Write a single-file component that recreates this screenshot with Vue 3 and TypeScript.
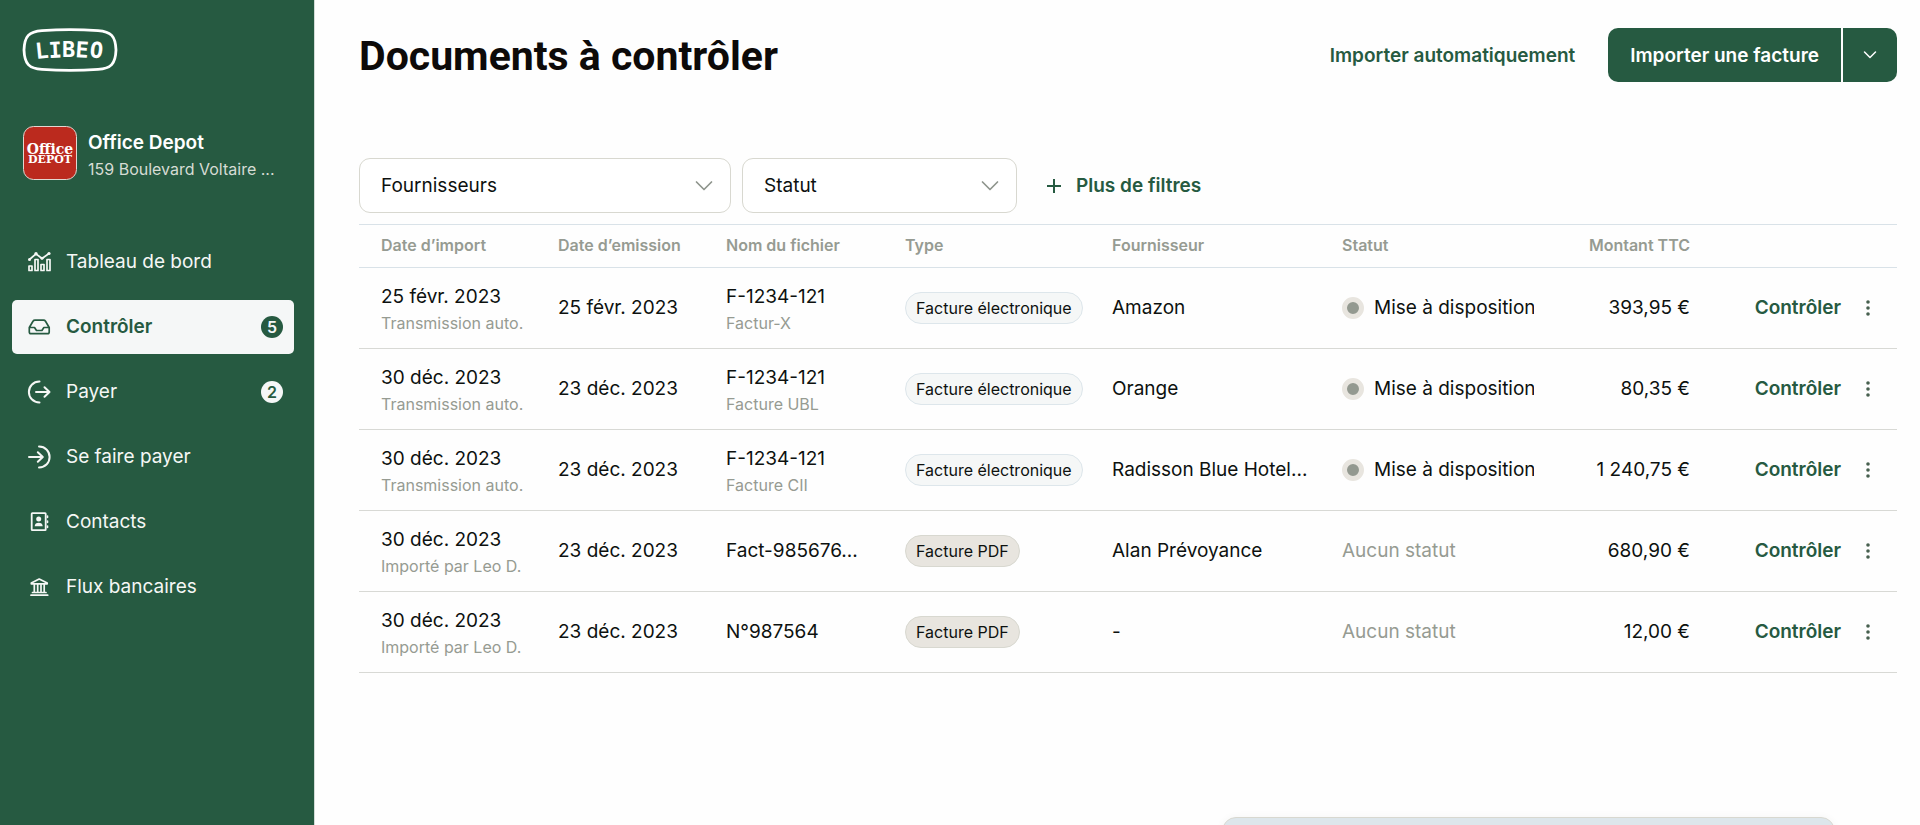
<script setup lang="ts">
import { ref } from 'vue'

interface NavItem {
  label: string
  icon: string
  badge?: number
}

interface DocumentRow {
  imported: string
  source: string
  issued: string
  file: string
  format?: string
  type: 'electronic' | 'pdf'
  supplier: string
  available: boolean
  amount: string
}

const navItems: NavItem[] = [
  { label: 'Tableau de bord', icon: 'chart' },
  { label: 'Contrôler', icon: 'inbox', badge: 5 },
  { label: 'Payer', icon: 'out', badge: 2 },
  { label: 'Se faire payer', icon: 'in' },
  { label: 'Contacts', icon: 'contacts' },
  { label: 'Flux bancaires', icon: 'bank' },
]
const active = ref('Contrôler')

const typeLabels = { electronic: 'Facture électronique', pdf: 'Facture PDF' }

const rows: DocumentRow[] = [
  { imported: '25 févr. 2023', source: 'Transmission auto.', issued: '25 févr. 2023', file: 'F-1234-121', format: 'Factur-X', type: 'electronic', supplier: 'Amazon', available: true, amount: '393,95 €' },
  { imported: '30 déc. 2023', source: 'Transmission auto.', issued: '23 déc. 2023', file: 'F-1234-121', format: 'Facture UBL', type: 'electronic', supplier: 'Orange', available: true, amount: '80,35 €' },
  { imported: '30 déc. 2023', source: 'Transmission auto.', issued: '23 déc. 2023', file: 'F-1234-121', format: 'Facture CII', type: 'electronic', supplier: 'Radisson Blue Hotel...', available: true, amount: '1 240,75 €' },
  { imported: '30 déc. 2023', source: 'Importé par Leo D.', issued: '23 déc. 2023', file: 'Fact-985676...', type: 'pdf', supplier: 'Alan Prévoyance', available: false, amount: '680,90 €' },
  { imported: '30 déc. 2023', source: 'Importé par Leo D.', issued: '23 déc. 2023', file: 'N°987564', type: 'pdf', supplier: '-', available: false, amount: '12,00 €' },
]
</script>

<template>
  <div class="app">
    <aside class="sidebar">
      <a href="#" class="brand" aria-label="Libeo">
        <svg width="96" height="44" viewBox="0 0 96 44">
          <path d="M20 2.600 Q48 .6 76 2.600 C89 3.500 93.500 8 94 22 C93.500 36 89 40.500 76 41.400 Q48 43.400 20 41.400 C7 40.500 2.500 36 2 22 C2.500 8 7 3.500 20 2.600Z" fill="none" stroke="#fff" stroke-width="2.800" />
          <text class="brand-text" x="14 27 40 53 67" y="31 30 29 29 29" rotate="-6 -3 0 4 7">LIBEO</text>
        </svg>
      </a>

      <div class="company">
        <svg class="company-logo" width="54" height="54" viewBox="0 0 54 54" role="img" aria-label="Office Depot">
          <rect x=".5" y=".5" width="53" height="53" rx="10" fill="#bb2a1e" stroke="#e3d6d0" />
          <text class="depot-top" x="27" y="28" text-anchor="middle">Office</text>
          <text class="depot-bottom" x="27" y="37" text-anchor="middle">DEPOT</text>
        </svg>
        <div class="company-text">
          <div class="company-name">Office Depot</div>
          <div class="company-address">159 Boulevard Voltaire ...</div>
        </div>
      </div>

      <nav class="nav">
        <a
          v-for="item in navItems"
          :key="item.label"
          href="#"
          class="nav-item"
          :class="{ active: active === item.label }"
          @click.prevent="active = item.label"
        >
          <svg class="nav-icon" width="24" height="24" viewBox="0 0 24 24" fill="none" stroke="currentColor" stroke-linecap="round" stroke-linejoin="round" stroke-width="1.700">
            <template v-if="item.icon === 'chart'">
              <path d="M2 16h3v4.500H2zM8 9.500h3v11H8zM14 14.500h3v6h-3zM20 9.500h3v11h-3z" />
              <path d="M2.500 9.500 9 3.800l6 4.700L22 3.500" />
              <g fill="currentColor" stroke="none">
                <circle cx="2.500" cy="9.500" r="1.500" /><circle cx="9" cy="3.800" r="1.700" />
                <circle cx="15" cy="8.300" r="1.500" /><circle cx="22" cy="3.500" r="1.600" />
              </g>
            </template>
            <path v-else-if="item.icon === 'inbox'" d="M2.300 12.500 6 6.200Q6.700 5.200 8 5.200h8.500q1.300 0 2 1l3.700 6.300V17q0 1.700-1.700 1.700H4Q2.300 18.700 2.300 17zM2.300 12.500h5.200l2 3h5.400l2-3h5.200" />
            <template v-else-if="item.icon === 'out'">
              <path d="M12.500 1.600C6 1.600 1.900 6.500 1.900 12S6 22.400 12.500 22.400" stroke-width="2" />
              <path d="M9 12h13.500M17.500 7.200l5 4.800-5 4.800" stroke-width="2" />
            </template>
            <template v-else-if="item.icon === 'in'">
              <path d="M12 1.600c6.500 0 10.600 4.900 10.600 10.400S18.500 22.400 12 22.400" stroke-width="2" />
              <path d="M2 12h13.500M10.800 7.200l5 4.800-5 4.800" stroke-width="2" />
            </template>
            <template v-else-if="item.icon === 'contacts'">
              <rect x="4.700" y="3.200" width="14" height="17" rx=".6" stroke-width="1.800" />
              <path d="M20.500 6v1.500M20.500 11v1.500M20.500 16v1.500" stroke-width="1.600" />
              <g fill="currentColor" stroke="none">
                <circle cx="11.700" cy="9" r="2.500" />
                <path d="M7.700 16.300c0-2.500 1.800-3.600 4-3.600s4 1.100 4 3.600z" />
              </g>
            </template>
            <template v-else>
              <path d="M4.300 8 12.200 4 20.200 8v.8H4.300z" />
              <path d="M7.300 9.500V17M10.700 9.500V17M14 9.500V17M17.200 9.500V17" stroke-width="1.700" />
              <path d="M5.500 17.500h13.500M4 20.200h16.700" stroke-width="1.700" />
            </template>
          </svg>
          <span class="nav-label">{{ item.label }}</span>
          <span v-if="item.badge" class="badge">{{ item.badge }}</span>
        </a>
      </nav>
    </aside>

    <main class="main">
      <header class="header">
        <h1>Documents à contrôler</h1>
        <div class="actions">
          <button type="button" class="link-button">Importer automatiquement</button>
          <div class="split">
            <button type="button" class="split-main">Importer une facture</button>
            <button type="button" class="split-more" aria-label="Plus d’options d’import">
              <svg width="14" height="10" viewBox="0 0 14 10" fill="none" stroke="currentColor" stroke-width="1.500" stroke-linecap="round" stroke-linejoin="round"><path d="M1.500 2 7 7.500 12.500 2" /></svg>
            </button>
          </div>
        </div>
      </header>

      <div class="filters">
        <div class="select select-wide">
          <select aria-label="Fournisseurs"><option>Fournisseurs</option></select>
          <svg width="18" height="12" viewBox="0 0 18 12" fill="none" stroke="currentColor" stroke-width="1.700" stroke-linecap="round" stroke-linejoin="round"><path d="M1.500 2 9 9.500 16.500 2" /></svg>
        </div>
        <div class="select">
          <select aria-label="Statut"><option>Statut</option></select>
          <svg width="18" height="12" viewBox="0 0 18 12" fill="none" stroke="currentColor" stroke-width="1.700" stroke-linecap="round" stroke-linejoin="round"><path d="M1.500 2 9 9.500 16.500 2" /></svg>
        </div>
        <button type="button" class="link-button more-filters">
          <svg width="16" height="16" viewBox="0 0 16 16" fill="none" stroke="currentColor" stroke-width="2"><path d="M8 1v14M1 8h14" /></svg>
          Plus de filtres
        </button>
      </div>

      <table class="documents">
        <colgroup>
          <col class="c-import" /><col class="c-issue" /><col class="c-file" /><col class="c-type" />
          <col class="c-supplier" /><col class="c-status" /><col class="c-amount" /><col class="c-actions" />
        </colgroup>
        <thead>
          <tr>
            <th scope="col">Date d’import</th>
            <th scope="col">Date d’emission</th>
            <th scope="col">Nom du fichier</th>
            <th scope="col">Type</th>
            <th scope="col">Fournisseur</th>
            <th scope="col">Statut</th>
            <th scope="col" class="amount">Montant TTC</th>
            <td></td>
          </tr>
        </thead>
        <tbody>
          <tr v-for="(row, index) in rows" :key="index">
            <td>
              <div class="stack">
                <div>{{ row.imported }}</div>
                <div class="secondary">{{ row.source }}</div>
              </div>
            </td>
            <td>{{ row.issued }}</td>
            <td>
              <div v-if="row.format" class="stack">
                <div>{{ row.file }}</div>
                <div class="secondary">{{ row.format }}</div>
              </div>
              <template v-else>{{ row.file }}</template>
            </td>
            <td><span class="tag" :class="row.type">{{ typeLabels[row.type] }}</span></td>
            <td>{{ row.supplier }}</td>
            <td class="status-cell">
              <span v-if="row.available" class="status"><i class="dot"></i>Mise à disposition</span>
              <span v-else class="no-status">Aucun statut</span>
            </td>
            <td class="amount">{{ row.amount }}</td>
            <td>
              <div class="row-actions">
                <button type="button" class="link-button">Contrôler</button>
                <button type="button" class="menu-button" aria-label="Autres actions">
                  <svg width="6" height="16" viewBox="0 0 6 16" fill="currentColor"><circle cx="3" cy="2" r="1.800" /><circle cx="3" cy="8" r="1.800" /><circle cx="3" cy="14" r="1.800" /></svg>
                </button>
              </div>
            </td>
          </tr>
        </tbody>
      </table>
    </main>

    <div class="drawer"></div>
  </div>
</template>

<style>
body {
  margin: 0;
}
</style>

<style scoped>
.app {
  display: flex;
  min-height: 100vh;
  background: #fefefe;
  color: #0d110f;
  font-family: Inter, "Liberation Sans", sans-serif;
  font-size: 19px;
  line-height: 26px;
}

.app *,
.app {
  box-sizing: border-box;
}

button,
select {
  margin: 0;
  padding: 0;
  border: 0;
  background: none;
  color: inherit;
  font: inherit;
  cursor: pointer;
}

.sidebar {
  flex: none;
  width: 315px;
  padding: 28px 20px 28px 12px;
  background: #265a41;
  border-right: 1px solid #d3dcd7;
  color: #f5f7f5;
}

.brand {
  display: block;
  width: 96px;
  height: 44px;
  margin-left: 10px;
}

.brand-text {
  fill: #fff;
  font: 700 22px "DejaVu Sans Mono", monospace;
}

.company {
  display: flex;
  align-items: flex-start;
  gap: 11px;
  margin: 54px 0 52px 11px;
}

.company-logo {
  flex: none;
}

.company-text {
  padding-top: 3px;
  line-height: 27px;
  white-space: nowrap;
}

.depot-top,
.depot-bottom {
  fill: #fff;
  font-family: "DejaVu Serif", serif;
  font-weight: 700;
}

.depot-top {
  font-size: 14px;
}

.depot-bottom {
  font-size: 11px;
}

.company-name {
  color: #fff;
  font-weight: 600;
}

.company-address {
  color: #d6dcd4;
  font-size: 16px;
}

.nav {
  display: flex;
  flex-direction: column;
  gap: 11px;
}

.nav-item {
  display: flex;
  align-items: center;
  height: 54px;
  padding: 0 11px 0 15px;
  border-radius: 5px;
  color: #f5f7f5;
  text-decoration: none;
}

.nav-item.active {
  background: #f5f7f7;
  color: #265a41;
  font-weight: 600;
}

.nav-icon {
  flex: none;
  margin-right: 15px;
}

.nav-label {
  flex: 1;
}

.badge {
  width: 22px;
  height: 22px;
  border-radius: 50%;
  background: #f5f7f7;
  color: #265a41;
  font-size: 16px;
  font-weight: 600;
  line-height: 22px;
  text-align: center;
}

.active .badge {
  background: #265a41;
  color: #f5f7f7;
}

.main {
  flex: 1;
  min-width: 0;
  padding: 28px 23px 28px 44px;
}

.header {
  display: flex;
  align-items: center;
  justify-content: space-between;
}

h1 {
  margin: 0;
  padding-top: 2px;
  color: #0d0a09;
  font: 700 41px/52px Roboto, sans-serif;
}

.actions {
  display: flex;
  align-items: center;
  gap: 33px;
}

.link-button {
  color: #265a41;
  font-weight: 600;
  white-space: nowrap;
}

.actions .link-button,
.split-main {
  padding-top: 2px;
}

.split {
  display: flex;
  gap: 2px;
  height: 54px;
}

.split button {
  background: #265a41;
  color: #fff;
  font-weight: 600;
}

.split-main {
  padding-right: 22px;
  padding-left: 22px;
  border-radius: 10px 0 0 10px;
}

.split .split-more {
  display: flex;
  align-items: center;
  justify-content: center;
  width: 54px;
  border-radius: 0 10px 10px 0;
}

.filters {
  display: flex;
  align-items: center;
  gap: 11px;
  margin: 76px 0 11px;
}

.select {
  position: relative;
  width: 275px;
}

.select-wide {
  width: 372px;
}

.select select {
  display: block;
  width: 100%;
  height: 55px;
  padding: 0 48px 0 21px;
  border: 1px solid #d8d8d0;
  border-radius: 11px;
  background: #fff;
  appearance: none;
}

.select svg {
  position: absolute;
  top: 22px;
  right: 18px;
  color: #8f958d;
  pointer-events: none;
}

.more-filters {
  display: flex;
  align-items: center;
  gap: 14px;
  margin-left: 18px;
}

.documents {
  width: 100%;
  border-collapse: collapse;
  table-layout: fixed;
}

.c-import { width: 177px; }
.c-issue { width: 168px; }
.c-file { width: 179px; }
.c-type { width: 207px; }
.c-supplier { width: 230px; }
.c-status { width: 214px; }
.c-amount { width: 178px; }
.c-actions { width: 185px; }

.documents th,
.documents td {
  padding: 0 0 0 22px;
  text-align: left;
  white-space: nowrap;
}

.documents thead tr {
  height: 43px;
  border-top: 1px solid #d9e2e8;
  border-bottom: 1px solid #d9e2e8;
}

.documents th {
  padding-bottom: 2px;
  color: #969b92;
  font-size: 16px;
  font-weight: 600;
}

.documents tbody tr {
  height: 81px;
  border-bottom: 1px solid #d8d9d5;
}

.documents .amount {
  padding-right: 22px;
  text-align: right;
}

.stack {
  padding-top: 4px;
}

.secondary {
  color: #969b92;
  font-size: 16px;
  line-height: 27px;
}

.tag {
  display: inline-block;
  padding: 0 10px;
  border: 1px solid #dde6eb;
  border-radius: 16px;
  background: #f5f7f7;
  font-size: 16px;
  line-height: 30px;
}

.tag.pdf {
  border-color: #d8d8d0;
  background: #e8e5df;
}

.documents .status-cell {
  overflow: hidden;
}

.status {
  display: flex;
  align-items: center;
  gap: 10px;
}

.dot {
  flex: none;
  width: 22px;
  height: 22px;
  border: 5px solid #e8e5df;
  border-radius: 50%;
  background: #939990;
}

.no-status {
  color: #969b92;
}

.row-actions {
  display: flex;
  align-items: center;
  justify-content: flex-end;
  gap: 24px;
  padding-right: 26px;
}

.menu-button {
  display: flex;
  color: #47604f;
}

.drawer {
  position: fixed;
  right: 85px;
  bottom: -32px;
  width: 613px;
  height: 40px;
  border: 1px solid #d8d8d0;
  border-radius: 14px 14px 0 0;
  background: #dde6eb;
  box-shadow: 0 0 8px rgba(0, 0, 0, 0.04);
}
</style>
